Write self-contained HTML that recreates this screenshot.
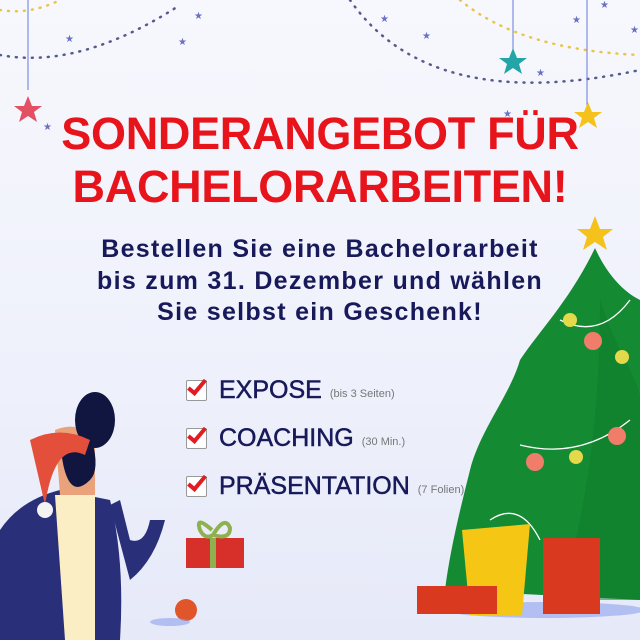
<!DOCTYPE html><html><head><meta charset="utf-8"><style>
body{margin:0}
#c{position:relative;width:640px;height:640px;overflow:hidden;background:linear-gradient(180deg,#f7f8fd 0%,#eef0fb 60%,#e6e9f8 100%);font-family:"Liberation Sans",sans-serif}
.t{position:absolute;left:0;width:640px;text-align:center;color:#e8141b;font-weight:bold;font-size:45px;letter-spacing:-0.3px}
.s{position:absolute;left:0;width:640px;text-align:center;color:#17195a;font-size:25px;font-weight:bold;line-height:31.5px;top:234px;letter-spacing:1.3px}
.li{position:absolute;left:186px;color:#17195a;font-size:25px;display:flex;align-items:center;-webkit-text-stroke:0.5px #17195a}
.li small{font-size:11px;color:#777;margin-left:8px;margin-top:6px;-webkit-text-stroke:0}
.cb{width:19px;height:19px;border:1.5px solid #999;background:#fff;margin-right:12px;position:relative;border-radius:2px}
.cb:after{content:"";position:absolute;left:5px;top:-5px;width:6px;height:15px;border:solid #e31b23;border-width:0 4px 4px 0;transform:rotate(40deg)}
svg{position:absolute;left:0;top:0}
</style></head><body><div id="c">
<svg width="640" height="640">
<g fill="none" stroke-dasharray="1 7" stroke-linecap="round" stroke-width="2.5">
<path d="M0 55 Q80 70 180 5" stroke="#565b8f"/>
<path d="M0 10 Q30 15 60 0" stroke="#e8c64a"/>
<path d="M350 0 Q430 115 640 70" stroke="#565b8f"/>
<path d="M460 0 Q520 50 640 55" stroke="#e8c64a"/>
</g>
<g stroke="#6678d8" stroke-width="1"><line x1="28" y1="0" x2="28" y2="90"/><line x1="513" y1="0" x2="513" y2="55"/><line x1="587" y1="0" x2="587" y2="110"/></g>
<g fill="#e34f63"><polygon points="28,96 32,106 42,106 34,112 37,122 28,116 19,122 22,112 14,106 24,106"/></g>
<polygon fill="#23a5a8" points="513,48 517,58 527,58 519,64 522,74 513,68 504,74 507,64 499,58 509,58"/>
<polygon fill="#f5c21b" points="588,102 592,112 602,112 594,118 597,128 588,122 579,128 582,118 574,112 584,112"/>
<polygon fill="#f5c21b" points="595,216 600,229 613,229 603,237 607,250 595,242 583,250 587,237 577,229 590,229"/>
<g fill="#6a6fc8" font-size="10"><text x="65" y="42">★</text><text x="178" y="45">★</text><text x="194" y="19">★</text><text x="380" y="22">★</text><text x="422" y="39">★</text><text x="536" y="76">★</text><text x="43" y="130">★</text><text x="572" y="23">★</text><text x="630" y="33">★</text><text x="503" y="117">★</text><text x="600" y="8">★</text></g>
<path fill="#148a32" d="M595 248 C570 300 540 330 520 360 C510 395 480 430 470 470 C460 510 450 550 445 590 L640 600 L640 300 C620 290 605 270 595 248Z"/>
<path fill="#0e7a2a" d="M600 300 C620 360 640 380 640 400 L640 600 L560 600 C590 500 600 400 600 300Z" opacity=".5"/>
<g fill="none" stroke="#fff" stroke-width="1.3"><path d="M560 320 Q600 340 630 300"/><path d="M520 445 Q580 460 630 420"/><path d="M490 520 Q520 500 540 540"/></g>
<g fill="#ef7d6a"><circle cx="593" cy="341" r="9"/><circle cx="617" cy="436" r="9"/><circle cx="535" cy="462" r="9"/></g>
<g fill="#e4d94a"><circle cx="570" cy="320" r="7"/><circle cx="622" cy="357" r="7"/><circle cx="576" cy="457" r="7"/></g>
<ellipse cx="545" cy="610" rx="100" ry="8" fill="#8fa2ee" opacity=".6"/>
<polygon fill="#f5c714" points="462,530 530,524 522,615 470,615"/>
<rect x="543" y="538" width="57" height="76" fill="#d93a1f"/>
<rect x="417" y="586" width="80" height="28" fill="#d93a1f"/>
<path fill="#2a2f7a" d="M0 530 Q20 500 60 490 L110 500 Q125 560 120 640 L0 640Z"/>
<path fill="#fbeec5" d="M55 495 L95 495 L95 640 L65 640Z"/>
<path fill="#2a2f7a" d="M110 505 L130 580 Q155 560 165 520 L150 520 Q145 545 130 540 L120 500Z"/>
<path fill="#e9a27a" d="M55 430 Q80 420 95 440 L95 495 L60 495Z"/>
<path fill="#111641" d="M60 440 Q65 505 90 480 Q100 470 92 440Z"/>
<ellipse cx="95" cy="420" rx="20" ry="28" fill="#111641"/>
<path fill="#e34f3a" d="M30 440 Q60 425 90 440 L85 455 Q55 440 45 505 Z"/>
<circle cx="45" cy="510" r="8" fill="#f3f3f3"/>
<rect x="186" y="538" width="58" height="30" fill="#d7302b"/>
<path d="M212 530 Q195 515 200 530 Q205 540 213 535 Q225 515 230 528 Q230 540 213 535" fill="none" stroke="#8fb04f" stroke-width="4"/>
<rect x="210" y="538" width="6" height="30" fill="#8fb04f"/>
<circle cx="186" cy="610" r="11" fill="#e0552a"/>
<ellipse cx="170" cy="622" rx="20" ry="4" fill="#8fa2ee" opacity=".6"/>
</svg>
<div class="t" style="top:108px">SONDERANGEBOT FÜR</div>
<div class="t" style="top:161px">BACHELORARBEITEN!</div>
<div class="s">Bestellen Sie eine Bachelorarbeit<br>bis zum 31. Dezember und wählen<br>Sie selbst ein Geschenk!</div>
<div class="li" style="top:376px"><span class="cb"></span>EXPOSE<small>(bis 3 Seiten)</small></div>
<div class="li" style="top:424px"><span class="cb"></span>COACHING<small>(30 Min.)</small></div>
<div class="li" style="top:472px"><span class="cb"></span>PRÄSENTATION<small>(7 Folien)</small></div>
</div></body></html>
